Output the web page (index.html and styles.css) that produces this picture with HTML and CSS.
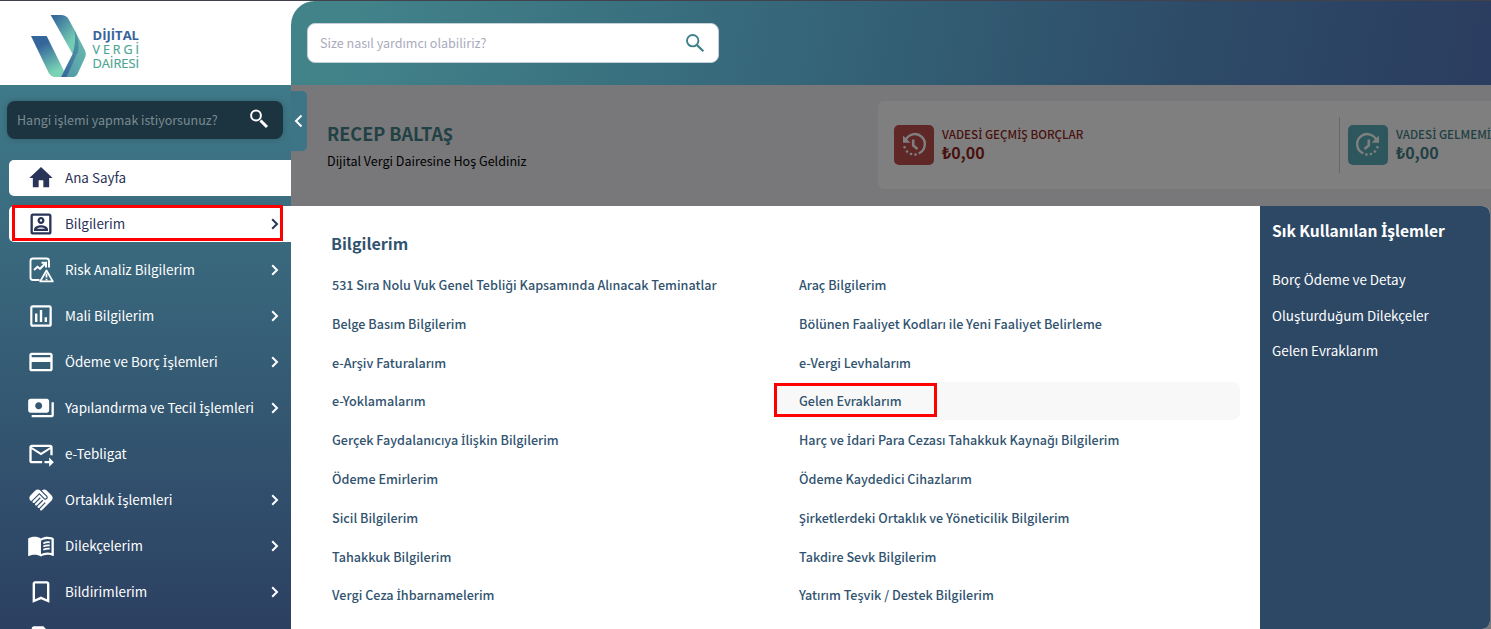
FILE: index.html
```
<!DOCTYPE html>
<html lang="tr">
<head>
  <meta charset="UTF-8">
  <meta name="viewport" content="width=device-width, initial-scale=1.0">
  <title>Dijital Vergi Dairesi</title>
  <link rel="stylesheet" href="styles.css">
</head>
<body>
  <div class="layout">
    <aside class="sidebar">
      <div class="logo">
        <svg width="112" height="66" viewBox="30 13 112 66">
          <defs>
            <linearGradient id="leftStrand" x1="0" y1="0" x2="0.45" y2="1">
              <stop offset="0.3" stop-color="#35669b"/>
              <stop offset="1" stop-color="#7bd3b5"/>
            </linearGradient>
            <linearGradient id="rightStrand" x1="0" y1="0" x2="0.7" y2="1">
              <stop offset="0.08" stop-color="#35669b"/>
              <stop offset="0.85" stop-color="#74cdb3"/>
            </linearGradient>
            <linearGradient id="fold" x1="1" y1="0" x2="0" y2="1">
              <stop offset="0" stop-color="#4f9aa5"/>
              <stop offset="1" stop-color="#36649a"/>
            </linearGradient>
            <linearGradient id="edge" x1="1" y1="0" x2="0" y2="1">
              <stop offset="0" stop-color="#6cc0af"/>
              <stop offset="1" stop-color="#5296a7"/>
            </linearGradient>
          </defs>
          <path d="M31 36H46.7L64 71 61 77H54Q51 76.500 49 73.500Z" fill="url(#leftStrand)"/>
          <path d="M50.700 15H61Q66 15 68.500 19L75 31 76 45 72.600 54Z" fill="url(#rightStrand)"/>
          <path d="M74.500 30L85.300 51Q86.500 54 85.300 57L77.500 74Q76 77 73 77H65L77 54Z" fill="url(#edge)"/>
          <path d="M74.500 30Q76.500 42 72.600 54L61 77H66.500L78 52Q80.500 43 74.500 30Z" fill="url(#fold)"/>
          <g font-family="Open Sans, sans-serif" font-size="13">
            <text x="92.500" y="39.500" font-weight="700" fill="#35649a" textLength="46.500" lengthAdjust="spacingAndGlyphs">DİJİTAL</text>
            <text x="92.500" y="53.500" fill="#4aa591" stroke="#4aa591" stroke-width="0.2" font-size="12.500" textLength="46.500">VERGİ</text>
            <text x="92.500" y="67.700" fill="#4aa591" stroke="#4aa591" stroke-width="0.2" textLength="46.500" lengthAdjust="spacingAndGlyphs">DAİRESİ</text>
          </g>
        </svg>
      </div>

      <div class="menu">
        <div class="menu-search">
          <span>Hangi işlemi yapmak istiyorsunuz?</span>
          <svg width="20" height="20" viewBox="0 0 20 20" fill="none" stroke="#fff"><circle cx="7" cy="6.500" r="4.900" stroke-width="2"/><path d="M11.500 11.500L18 18" stroke-width="3"/></svg>
        </div>

        <nav class="menu-list">
          <a class="menu-item active">
            <svg class="icon" viewBox="0 0 24 24"><path d="M10 20v-6h4v6h5v-8h3L12 2.500 2 12h3v8z"/></svg>
            <span>Ana Sayfa</span>
          </a>
          <a class="menu-item active">
            <svg class="icon" viewBox="0 0 24 24"><path d="M19 3H5c-1.110 0-2 .9-2 2v14c0 1.100.89 2 2 2h14c1.100 0 2-.9 2-2V5c0-1.100-.9-2-2-2zm0 16H5V5h14v14zM12 12c1.650 0 3-1.350 3-3s-1.350-3-3-3-3 1.350-3 3 1.350 3 3 3zm0-4c.55 0 1 .45 1 1s-.45 1-1 1-1-.45-1-1 .45-1 1-1zm6 8.580c0-2.500-3.970-3.580-6-3.580s-6 1.080-6 3.580V18h12v-1.420zM8.480 16c.74-.51 2.230-1 3.520-1 1.300 0 2.780.49 3.520 1H8.480z"/></svg>
            <span>Bilgilerim</span>
            <svg class="chevron" viewBox="0 0 8 12"><path d="M1.200 1.200L6 6 1.200 10.800"/></svg>
            <i class="mark mark-menu"></i>
          </a>
          <a class="menu-item">
            <svg class="icon" viewBox="0 0 28 28" fill="none" stroke="currentColor"><path d="M12.500 24H6Q3.500 24 3.500 21.500V5Q3.500 2.500 6 2.500H19.500Q22 2.500 22 5V11.500" stroke-width="1.900"/><path d="M7 14L10.500 10.800 13 12.800 18.500 7.300M14.500 6.800H19V11.500" stroke-width="2"/><path d="M19.500 14.500L25.800 25.400H13.200Z" stroke-width="1.800" stroke-linejoin="round"/><path d="M19.500 17.500V21.500M19.500 22.700V24.500" stroke-width="1.800"/></svg>
            <span>Risk Analiz Bilgilerim</span>
            <svg class="chevron" viewBox="0 0 8 12"><path d="M1.200 1.200L6 6 1.200 10.800"/></svg>
          </a>
          <a class="menu-item">
            <svg class="icon" viewBox="0.300 0.300 23.400 23.400"><path d="M9 17H7v-7h2v7zm4 0h-2V7h2v10zm4 0h-2v-4h2v4zm2 2.200H4.800V4.800H19.200zM19 3H5c-1.100 0-2 .9-2 2v14c0 1.100.9 2 2 2h14c1.100 0 2-.9 2-2V5c0-1.100-.9-2-2-2z" fill-rule="evenodd"/></svg>
            <span>Mali Bilgilerim</span>
            <svg class="chevron" viewBox="0 0 8 12"><path d="M1.200 1.200L6 6 1.200 10.800"/></svg>
          </a>
          <a class="menu-item">
            <svg class="icon" viewBox="0 0 24 24"><path d="M20 4H4c-1.110 0-1.990.89-1.990 2L2 18c0 1.110.89 2 2 2h16c1.110 0 2-.89 2-2V6c0-1.110-.89-2-2-2zm0 14H4v-6h16v6zm0-10H4V6h16v2z"/></svg>
            <span>Ödeme ve Borç <b class="tr">İ</b>şlemleri</span>
            <svg class="chevron" viewBox="0 0 8 12"><path d="M1.200 1.200L6 6 1.200 10.800"/></svg>
          </a>
          <a class="menu-item">
            <svg class="icon" viewBox="0 0 24 24"><path d="M19 14V6c0-1.100-.9-2-2-2H3c-1.100 0-2 .9-2 2v8c0 1.100.9 2 2 2h14c1.100 0 2-.9 2-2zm-9-1c-1.660 0-3-1.340-3-3s1.340-3 3-3 3 1.340 3 3-1.340 3-3 3zm13-6v11c0 1.100-.9 2-2 2H4v-2h17V7h2z"/></svg>
            <span>Yapılandırma ve Tecil <b class="tr">İ</b>şlemleri</span>
            <svg class="chevron" viewBox="0 0 8 12"><path d="M1.200 1.200L6 6 1.200 10.800"/></svg>
          </a>
          <a class="menu-item">
            <svg class="icon" viewBox="0 0 24 24"><path d="M20 4H4c-1.100 0-1.990.9-1.990 2L2 18c0 1.100.9 2 2 2h9v-2H4V8l8 5 8-5v5h2V6c0-1.100-.9-2-2-2zm-8 7L4 6h16l-8 5zm7 4l4 4-4 4v-3h-4v-2h4v-3z"/></svg>
            <span>e-Tebligat</span>
          </a>
          <a class="menu-item">
            <svg class="icon" viewBox="0 0 24 24"><path d="M16.480 10.410c-.39.39-1.040.39-1.430 0l-4.470-4.460-7.050 7.040-.66-.63c-1.170-1.170-1.170-3.070 0-4.240l4.240-4.240c1.170-1.170 3.070-1.170 4.240 0L16.480 9c.39.39.39 1.020 0 1.410zm.7-2.120c.78.78.78 2.050 0 2.830-1.270 1.270-2.610.22-2.830 0l-3.760-3.760-5.570 5.570c-.39.39-.39 1.020 0 1.410.39.39 1.020.39 1.420 0l4.620-4.620.71.71-4.620 4.620c-.39.39-.39 1.020 0 1.410.39.39 1.020.39 1.420 0l4.620-4.620.71.71-4.620 4.620c-.39.39-.39 1.020 0 1.410.39.39 1.020.39 1.410 0l4.620-4.620.71.71-4.620 4.620c-.39.39-.39 1.020 0 1.410.39.39 1.020.39 1.410 0l8.320-8.340c1.170-1.170 1.170-3.070 0-4.240l-4.240-4.240c-1.150-1.150-3.010-1.170-4.180-.06l4.470 4.470z"/></svg>
            <span>Ortaklık <b class="tr">İ</b>şlemleri</span>
            <svg class="chevron" viewBox="0 0 8 12"><path d="M1.200 1.200L6 6 1.200 10.800"/></svg>
          </a>
          <a class="menu-item">
            <svg class="icon" viewBox="0 0.500 24 24"><path d="M21 5c-1.110-.35-2.330-.5-3.500-.5-1.950 0-4.050.4-5.500 1.500-1.450-1.100-3.550-1.500-5.500-1.500S2.450 4.900 1 6v14.650c0 .25.25.5.5.5.1 0 .15-.05.25-.05C3.100 20.450 5.050 20 6.500 20c1.950 0 4.050.4 5.500 1.500 1.350-.85 3.800-1.500 5.500-1.500 1.650 0 3.350.3 4.750 1.050.1.05.15.05.25.05.25 0 .5-.25.5-.5V6c-.6-.45-1.250-.75-2-1zm0 13.500c-1.100-.35-2.300-.5-3.500-.5-1.700 0-4.150.65-5.500 1.500V8c1.350-.85 3.800-1.500 5.500-1.500 1.200 0 2.400.15 3.500.5v11.500z"/><path d="M14 10.300Q16.500 9 19.500 9.300M14 13Q16.500 11.700 19.500 12M14 15.700Q16.500 14.400 19.500 14.700" fill="none" stroke="currentColor" stroke-width="1.500"/></svg>
            <span>Dilekçelerim</span>
            <svg class="chevron" viewBox="0 0 8 12"><path d="M1.200 1.200L6 6 1.200 10.800"/></svg>
          </a>
          <a class="menu-item">
            <svg class="icon" viewBox="0.300 0.300 23.400 23.400"><path d="M17 3H7c-1.100 0-1.990.9-1.990 2L5 21l7-3 7 3V5c0-1.100-.9-2-2-2zm0 15l-5-2.180L7 18V5h10v13z"/></svg>
            <span>Bildirimlerim</span>
            <svg class="chevron" viewBox="0 0 8 12"><path d="M1.200 1.200L6 6 1.200 10.800"/></svg>
          </a>
          <a class="menu-item">
            <svg class="icon" viewBox="0 0 24 24"><path d="M14 2H6c-1.100 0-2 .9-2 2v16c0 1.100.9 2 2 2h12c1.100 0 2-.9 2-2V8l-6-6z"/></svg>
          </a>
        </nav>
      </div>
    </aside>

    <main class="main">
      <header class="header">
        <div class="header-search">
          <span>Size nasıl yardımcı olabiliriz?</span>
          <svg width="20" height="20" viewBox="0 0 20 20" fill="none" stroke="#3f808a"><circle cx="7.700" cy="7.700" r="5.700" stroke-width="1.900"/><path d="M12 12L18.300 18.300" stroke-width="2.300"/></svg>
        </div>
      </header>

      <section class="content">
        <div class="welcome">
          <h1>RECEP BALTAŞ</h1>
          <p>Dijital Vergi Dairesine Hoş Geldiniz</p>
        </div>
        <div class="debts">
          <div class="debt debt-past">
            <div class="debt-icon">
              <svg width="28" height="28" viewBox="0 0 28 28" fill="none" stroke="#fff"><path d="M5.500 9.500A10 10 0 1 1 18.700 22.300" stroke-width="2.400"/><path d="M3 4.500V11.800H10.300Z" fill="#fff" stroke="none"/><path d="M13.200 8.500V14.500L17.500 18" stroke-width="2.600"/><path d="M4.500 16.200h.1M7 20.500h.1M11 23h.1M15.500 23.600h.1" stroke-width="2.600" stroke-linecap="round"/></svg>
            </div>
            <div>
              <h4>VADES<b class="tr">İ</b> GEÇM<b class="tr">İ</b>Ş BORÇLAR</h4>
              <strong>₺0,00</strong>
            </div>
          </div>
          <div class="debt debt-next">
            <div class="debt-icon">
              <svg width="28" height="28" viewBox="0 0 28 28" fill="none" stroke="#fff"><path d="M22.500 9.500A10 10 0 1 0 9.300 22.300" stroke-width="2.400"/><path d="M25 4.500V11.800H17.700Z" fill="#fff" stroke="none"/><path d="M14.800 8.500V14.500L10.500 18" stroke-width="2.600"/><path d="M23.500 16.200h-.1M21 20.500h-.1M17 23h-.1M12.500 23.600h-.1" stroke-width="2.600" stroke-linecap="round"/></svg>
            </div>
            <div>
              <h4>VADES<b class="tr">İ</b> GELMEM<b class="tr">İ</b>Ş BORÇLAR</h4>
              <strong>₺0,00</strong>
            </div>
          </div>
        </div>
        <div class="backdrop"></div>
        <button class="collapse"><svg width="9" height="14" viewBox="0 0 9 14"><path d="M7.500 1.500L2 7 7.500 12.500" fill="none" stroke="#fff" stroke-width="2"/></svg></button>

        <div class="mega">
          <div class="mega-body">
            <h2>Bilgilerim</h2>
            <div class="links">
              <a>531 Sıra Nolu Vuk Genel Tebliği Kapsamında Alınacak Teminatlar</a>
              <a>Araç Bilgilerim</a>
              <a>Belge Basım Bilgilerim</a>
              <a>Bölünen Faaliyet Kodları ile Yeni Faaliyet Belirleme</a>
              <a>e-Arşiv Faturalarım</a>
              <a>e-Vergi Levhalarım</a>
              <a>e-Yoklamalarım</a>
              <a class="hover">Gelen Evraklarım<i class="mark mark-link"></i></a>
              <a>Gerçek Faydalanıcıya <b class="tr">İ</b>lişkin Bilgilerim</a>
              <a>Harç ve <b class="tr">İ</b>dari Para Cezası Tahakkuk Kaynağı Bilgilerim</a>
              <a>Ödeme Emirlerim</a>
              <a>Ödeme Kaydedici Cihazlarım</a>
              <a>Sicil Bilgilerim</a>
              <a>Şirketlerdeki Ortaklık ve Yöneticilik Bilgilerim</a>
              <a>Tahakkuk Bilgilerim</a>
              <a>Takdire Sevk Bilgilerim</a>
              <a>Vergi Ceza <b class="tr">İ</b>hbarnamelerim</a>
              <a>Yatırım Teşvik / Destek Bilgilerim</a>
            </div>
          </div>
          <div class="mega-side">
            <h3>Sık Kullanılan <b class="tr">İ</b>şlemler</h3>
            <a>Borç Ödeme ve Detay</a>
            <a>Oluşturduğum Dilekçeler</a>
            <a>Gelen Evraklarım</a>
          </div>
        </div>
      </section>
    </main>
  </div>
</body>
</html>
```
FILE: styles.css
```
* {
  margin: 0;
  padding: 0;
  box-sizing: border-box;
}

body {
  font-family: "Noto Sans CJK SC", "Noto Sans", sans-serif;
  font-size: 13.43px;
  line-height: 20px;
  background: #fff;
  overflow: hidden;
}

/* dotted capital I needs a font that has the glyph */
.tr {
  font-family: "Noto Sans", sans-serif;
  font-weight: inherit;
  line-height: 1;
}

.layout {
  display: flex;
  height: 629px;
  border-top: 1px solid #42424c;
}

.sidebar {
  width: 291px;
  flex-shrink: 0;
  display: flex;
  flex-direction: column;
}

.logo {
  height: 84px;
  flex-shrink: 0;
  padding: 12px 0 0 30px;
}

.menu {
  flex: 1;
  min-height: 0;
  overflow: hidden;
  padding-top: 16px;
  background: linear-gradient(#3f7a89, #2c4062);
}

.menu-search {
  display: flex;
  align-items: center;
  justify-content: space-between;
  height: 38px;
  margin: 0 8px 21px 7px;
  padding: 0 14px 0 10px;
  border-radius: 8px;
  background: #1c343f;
  box-shadow: 0 0 6px rgba(0, 0, 0, 0.2);
  color: #7a8b92;
  font-size: 12.5px;
}

.menu-search svg {
  margin-top: -2px;
}

.menu-list {
  display: flex;
  flex-direction: column;
  gap: 10px;
  padding-left: 9px;
}

.menu-item {
  position: relative;
  display: flex;
  align-items: center;
  flex-shrink: 0;
  height: 36px;
  padding: 0 12px 0 18px;
  border-radius: 5px 0 0 5px;
  color: #fff;
}

.menu-item.active {
  background: #fff;
  color: #2a3358;
}

.menu-item span {
  padding-bottom: 2px;
}

.icon {
  width: 28px;
  height: 28px;
  margin-right: 10px;
  fill: currentColor;
}

.icon[fill="none"] {
  fill: none;
}

.chevron {
  width: 8px;
  height: 12px;
  margin-left: auto;
  fill: none;
  stroke: currentColor;
  stroke-width: 2;
}

.mark {
  position: absolute;
  border: 3px solid #f00;
}

.mark-menu {
  left: 3px;
  top: -1px;
  width: 271px;
  height: 36px;
}

.mark-link {
  left: -1px;
  top: 1px;
  width: 163px;
  height: 34px;
}

.main {
  flex: 1;
  min-width: 0;
  display: flex;
  flex-direction: column;
}

.header {
  height: 84px;
  flex-shrink: 0;
  padding: 22px 16px;
  border-top-left-radius: 24px;
  background: linear-gradient(100deg, #42838a 5%, #356679 42%, #2d4a67 76%, #2b3d60);
}

.header-search {
  display: flex;
  align-items: center;
  justify-content: space-between;
  width: 412px;
  height: 40px;
  padding: 0 13px 0 12px;
  border: 1px solid #c5d0d8;
  border-radius: 8px;
  background: #fff;
  color: #a9abbd;
  font-size: 12.55px;
}

.content {
  position: relative;
  flex: 1;
  min-height: 0;
  display: flex;
  align-items: flex-start;
  overflow: hidden;
  background: #f0f0f4;
}

.welcome {
  width: 587px;
  flex-shrink: 0;
  padding: 35px 0 0 36px;
}

.welcome h1 {
  font-size: 18px;
  line-height: 26px;
  color: #42838a;
}

.welcome p {
  margin-top: 5px;
  font-size: 12.55px;
  color: #000;
}

.debts {
  display: flex;
  width: 930px;
  flex-shrink: 0;
  height: 88px;
  margin-top: 16px;
  padding: 16px;
  border-radius: 6px;
  background: #fff;
}

.debt {
  display: flex;
  align-items: center;
  width: 445px;
}

.debt-past {
  color: #92241c;
}

.debt h4 {
  margin-top: -3px;
  font-size: 11.65px;
  line-height: 18px;
  font-weight: 500;
  white-space: nowrap;
}

.debt strong {
  display: block;
  margin-top: -1px;
  font-size: 16px;
  line-height: 20px;
}

.debt-icon {
  display: flex;
  align-items: center;
  justify-content: center;
  width: 40px;
  height: 40px;
  margin-right: 8px;
  border-radius: 5px;
}

.debt-past .debt-icon {
  background: #c04e4e;
}

.debt-next {
  padding-left: 8px;
  border-left: 1px solid #d0d0d4;
  color: #438088;
}

.debt-next .debt-icon {
  background: #5aafb8;
}

.backdrop {
  position: absolute;
  inset: 0;
  background: rgba(0, 0, 0, 0.5);
}

.collapse {
  position: absolute;
  left: 0;
  top: 6px;
  width: 16px;
  height: 60px;
  border: 0;
  border-radius: 0 5px 5px 0;
  background: #3d7486;
}

.collapse svg {
  display: block;
  margin-left: 3px;
}

/* menu that opens over the dimmed page */
.mega {
  position: absolute;
  left: 0;
  right: 1px;
  top: 121px;
  bottom: 0;
  display: flex;
  border-radius: 0 8px 8px 0;
  overflow: hidden;
  background: #fff;
  color: #31536f;
}

.mega-body {
  flex: 1;
  padding: 25px 20px 0 17px;
}

.mega-body h2 {
  padding-left: 23px;
  margin-bottom: 11.1px;
  font-size: 16.1px;
  line-height: 24px;
}

.links {
  display: grid;
  grid-template-columns: 465px 465px;
  grid-auto-rows: 38px;
  gap: 0.8px 2px;
}

.links a {
  position: relative;
  padding-left: 24px;
  border-radius: 8px;
  font-size: 12.6px;
  line-height: 38px;
  font-weight: 500;
  white-space: nowrap;
}

.links a.hover {
  background: #f8f8f8;
}

.mega-side {
  width: 230px;
  padding: 13px 12px;
  background: #2d4865;
  color: #fff;
}

.mega-side h3 {
  margin-bottom: 28px;
  font-size: 15.6px;
  line-height: 22px;
}

.mega-side a {
  display: block;
  margin-bottom: 15.5px;
}
```
